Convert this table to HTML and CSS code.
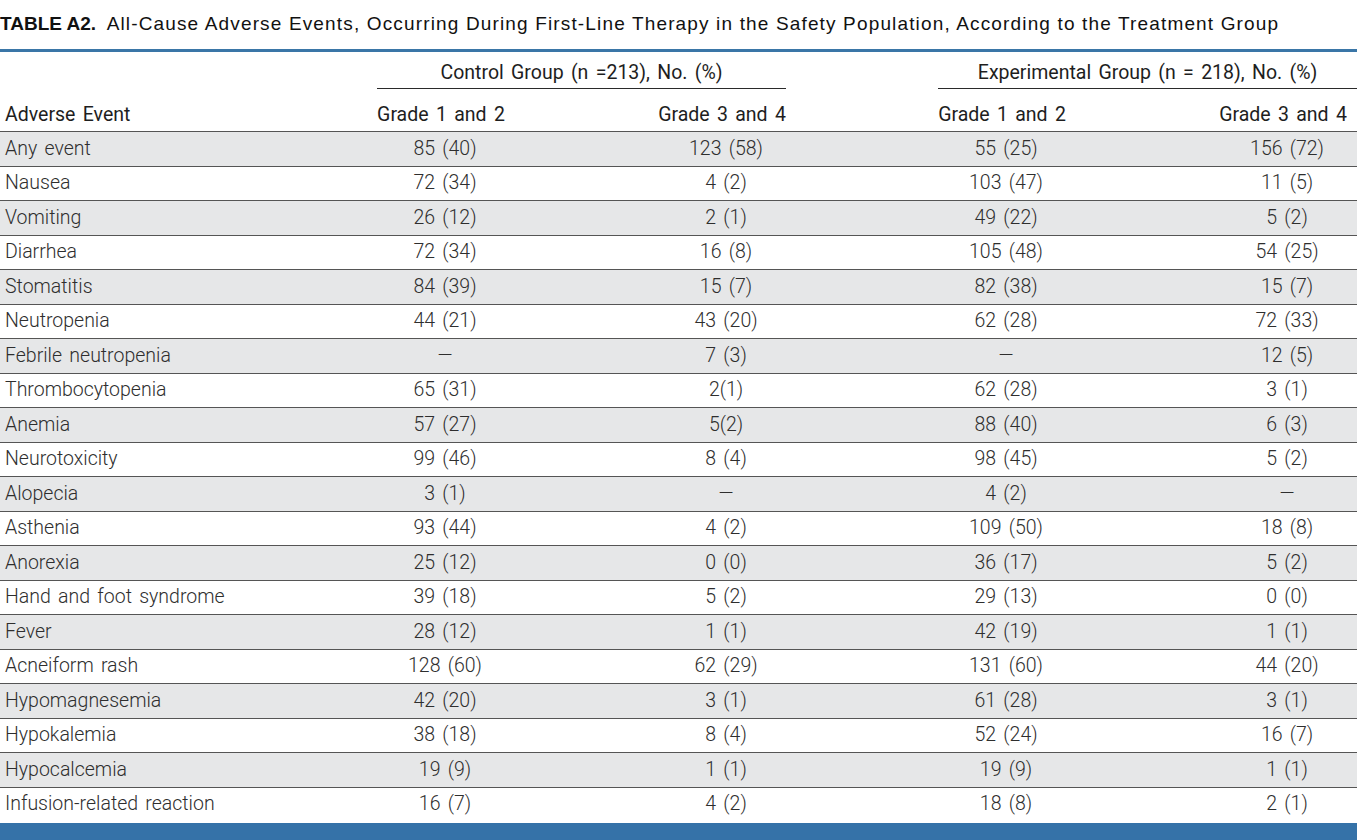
FILE: index.html
```html
<!DOCTYPE html>
<html lang="en">
<head>
<meta charset="utf-8">
<title>Table A2</title>
<link rel="stylesheet" href="styles.css">
</head>
<body>
<div class="page">
  <h1 class="caption"><span class="label">TABLE A2.</span>&nbsp; <span class="title">All-Cause Adverse Events, Occurring During First-Line Therapy in the Safety Population, According to the Treatment Group</span></h1>
  <hr class="rule">
  <table class="ae">
    <colgroup>
      <col class="c1"><col class="c2"><col class="c3"><col class="c4"><col class="c5">
    </colgroup>
    <thead>
      <tr class="group">
        <th></th>
        <th colspan="2" class="grp grp-ctrl"><span class="grp-text">Control Group (n =213), No. (%)</span></th>
        <th colspan="2" class="grp grp-exp"><span class="grp-text">Experimental Group (n = 218), No. (%)</span></th>
      </tr>
      <tr class="cols">
        <th class="ev">Adverse Event</th>
        <th class="g2">Grade 1 and 2</th>
        <th class="g3">Grade 3 and 4</th>
        <th class="g4">Grade 1 and 2</th>
        <th class="g5">Grade 3 and 4</th>
      </tr>
    </thead>
    <tbody>
      <tr class="odd"><td class="ev">Any event</td><td class="g2">85 (40)</td><td class="g3">123 (58)</td><td class="g4">55 (25)</td><td class="g5">156 (72)</td></tr>
      <tr><td class="ev">Nausea</td><td class="g2">72 (34)</td><td class="g3">4 (2)</td><td class="g4">103 (47)</td><td class="g5">11 (5)</td></tr>
      <tr class="odd"><td class="ev">Vomiting</td><td class="g2">26 (12)</td><td class="g3">2 (1)</td><td class="g4">49 (22)</td><td class="g5">5 (2)</td></tr>
      <tr><td class="ev">Diarrhea</td><td class="g2">72 (34)</td><td class="g3">16 (8)</td><td class="g4">105 (48)</td><td class="g5">54 (25)</td></tr>
      <tr class="odd"><td class="ev">Stomatitis</td><td class="g2">84 (39)</td><td class="g3">15 (7)</td><td class="g4">82 (38)</td><td class="g5">15 (7)</td></tr>
      <tr><td class="ev">Neutropenia</td><td class="g2">44 (21)</td><td class="g3">43 (20)</td><td class="g4">62 (28)</td><td class="g5">72 (33)</td></tr>
      <tr class="odd"><td class="ev">Febrile neutropenia</td><td class="g2">—</td><td class="g3">7 (3)</td><td class="g4">—</td><td class="g5">12 (5)</td></tr>
      <tr><td class="ev">Thrombocytopenia</td><td class="g2">65 (31)</td><td class="g3">2(1)</td><td class="g4">62 (28)</td><td class="g5">3 (1)</td></tr>
      <tr class="odd"><td class="ev">Anemia</td><td class="g2">57 (27)</td><td class="g3">5(2)</td><td class="g4">88 (40)</td><td class="g5">6 (3)</td></tr>
      <tr><td class="ev">Neurotoxicity</td><td class="g2">99 (46)</td><td class="g3">8 (4)</td><td class="g4">98 (45)</td><td class="g5">5 (2)</td></tr>
      <tr class="odd"><td class="ev">Alopecia</td><td class="g2">3 (1)</td><td class="g3">—</td><td class="g4">4 (2)</td><td class="g5">—</td></tr>
      <tr><td class="ev">Asthenia</td><td class="g2">93 (44)</td><td class="g3">4 (2)</td><td class="g4">109 (50)</td><td class="g5">18 (8)</td></tr>
      <tr class="odd"><td class="ev">Anorexia</td><td class="g2">25 (12)</td><td class="g3">0 (0)</td><td class="g4">36 (17)</td><td class="g5">5 (2)</td></tr>
      <tr><td class="ev">Hand and foot syndrome</td><td class="g2">39 (18)</td><td class="g3">5 (2)</td><td class="g4">29 (13)</td><td class="g5">0 (0)</td></tr>
      <tr class="odd"><td class="ev">Fever</td><td class="g2">28 (12)</td><td class="g3">1 (1)</td><td class="g4">42 (19)</td><td class="g5">1 (1)</td></tr>
      <tr><td class="ev">Acneiform rash</td><td class="g2">128 (60)</td><td class="g3">62 (29)</td><td class="g4">131 (60)</td><td class="g5">44 (20)</td></tr>
      <tr class="odd"><td class="ev">Hypomagnesemia</td><td class="g2">42 (20)</td><td class="g3">3 (1)</td><td class="g4">61 (28)</td><td class="g5">3 (1)</td></tr>
      <tr><td class="ev">Hypokalemia</td><td class="g2">38 (18)</td><td class="g3">8 (4)</td><td class="g4">52 (24)</td><td class="g5">16 (7)</td></tr>
      <tr class="odd"><td class="ev">Hypocalcemia</td><td class="g2">19 (9)</td><td class="g3">1 (1)</td><td class="g4">19 (9)</td><td class="g5">1 (1)</td></tr>
      <tr class="last"><td class="ev">Infusion-related reaction</td><td class="g2">16 (7)</td><td class="g3">4 (2)</td><td class="g4">18 (8)</td><td class="g5">2 (1)</td></tr>
    </tbody>
  </table>
  <div class="footbar"></div>
</div>
</body>
</html>
```

FILE: styles.css
```css
html, body {
  margin: 0;
  padding: 0;
  background: #ffffff;
}

.page {
  display: block;
  width: 1357px;
  height: 840px;
  overflow: hidden;
  background-image: linear-gradient(#3a76a7, #3a76a7);
  background-repeat: no-repeat;
  background-position: 0 49px;
  background-size: 100% 3px;
}

.caption {
  display: block;
  margin: 0;
  padding: 13px 0 0 0;
  height: 49px;
  box-sizing: border-box;
  font-family: "Liberation Sans", Arial, sans-serif;
  font-weight: normal;
  font-size: 19px;
  line-height: 22px;
  color: #111;
  white-space: nowrap;
}

.caption .label {
  font-weight: bold;
}

.caption .title {
  letter-spacing: 1.15px;
}

.rule {
  display: block;
  margin: 0;
  height: 3px;
  border: none;
  background-color: #3a76a7;
  color: #3a76a7;
}

.ae {
  border-collapse: collapse;
  table-layout: fixed;
  width: 1357px;
  font-family: Roboto, "Liberation Sans", sans-serif;
  font-size: 19.5px;
  font-weight: 300;
  word-spacing: 2.5px;
  color: #2e2e2e;
}

.c1 { width: 377px; }
.c2 { width: 128px; }
.c3 { width: 281px; }
.c4 { width: 280px; }
.c5 { width: 291px; }

.ae th {
  font-weight: 400;
  color: #1e1e1e;
  padding: 0;
}

.ae td {
  padding: 0;
  height: 33.5px;
  vertical-align: middle;
  line-height: 22px;
}

.group th {
  height: 37px;
  vertical-align: top;
}

.grp-exp {
  padding-left: 152px !important;
}

.grp-text {
  display: block;
  text-align: center;
  border-bottom: 1px solid #2a2a2a;
  padding: 10px 0 5px;
  line-height: 21px;
}

.cols th {
  height: 36px;
  vertical-align: bottom;
  padding-bottom: 6px;
  line-height: 21px;
  border-bottom: 1px solid #555;
}

.ev {
  text-align: left;
  padding-left: 5px !important;
}

.g2 { text-align: center; }
.g3 { text-align: center; padding-left: 153px !important; }
.g4 { text-align: center; padding-left: 152px !important; }
.g5 { text-align: center; padding-left: 153px !important; padding-right: 10px !important; }

tbody .g2 { padding-left: 8px !important; }
tbody .g3 { padding-left: 161px !important; }
tbody .g4 { padding-left: 160px !important; }
tbody .g5 { padding-left: 161px !important; padding-right: 10px !important; }

tbody tr {
  border-bottom: 1px solid #555;
}

tbody tr.odd {
  background: #e6e7e8;
}

tbody tr.last {
  border-bottom: none;
}

.footbar {
  margin-top: 2px;
  height: 24px;
  background: #3572a8;
}
```
